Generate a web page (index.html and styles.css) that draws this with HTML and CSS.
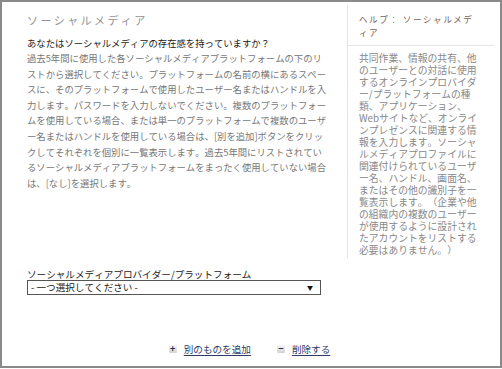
FILE: index.html
```html
<!DOCTYPE html>
<html lang="ja">
<head>
<meta charset="utf-8"/>
<title>ソーシャルメディア</title>
<link rel="stylesheet" href="styles.css">
</head>
<body>
<div class="frame">
	<div class="top">
		<div class="main">
			<h1 class="title">ソーシャルメディア</h1>
			<p class="question">あなたはソーシャルメディアの存在感を持っていますか？</p>
			<p class="desc">過去5年間に使用した各ソーシャルメディアプラットフォームの下のリストから選択してください。プラットフォームの名前の横にあるスペースに、そのプラットフォームで使用したユーザー名またはハンドルを入力します。パスワードを入力しないでください。複数のプラットフォームを使用している場合、または単一のプラットフォームで複数のユーザー名またはハンドルを使用している場合は、[別を追加]ボタンをクリックしてそれぞれを個別に一覧表示します。過去5年間にリストされているソーシャルメディアプラットフォームをまったく使用していない場合は、[なし]を選択します。</p>
		</div>
		<div class="side">
			<h2 class="side-title">ヘルプ： ソーシャルメディア</h2>
			<p class="side-text">共同作業、情報の共有、他のユーザーとの対話に使用するオンラインプロバイダー/プラットフォームの種類、アプリケーション、Webサイトなど、オンラインプレゼンスに関連する情報を入力します。ソーシャルメディアプロファイルに関連付けられているユーザー名、ハンドル、画面名、またはその他の識別子を一覧表示します。（企業や他の組織内の複数のユーザーが使用するように設計されたアカウントをリストする必要はありません。）</p>
		</div>
	</div>
	<div class="field">
		<label class="label" for="provider">ソーシャルメディアプロバイダー/プラットフォーム</label>
		<div class="select-wrap">
			<select id="provider" class="select">
				<option>- 一つ選択してください -</option>
			</select>
			<span class="arrow">▼</span>
		</div>
	</div>
	<div class="actions">
		<a class="action" href="#"><span class="ico">+</span><span class="txt">別のものを追加</span></a>
		<a class="action" href="#"><span class="ico">−</span><span class="txt">削除する</span></a>
	</div>
</div>
</body>
</html>
```
FILE: styles.css
```css
html, body {
	margin: 0;
	background: #fff;
}
body {
	font-family: "Noto Sans CJK JP", "Noto Sans", sans-serif;
	text-spacing-trim: space-all;
	font-kerning: none;
}
.frame {
	box-sizing: border-box;
	width: 502px;
	height: 368px;
	border: 2px solid #8a8a8a;
	padding: 3px 0 0 25px;
}
/* top area */
.top {
	display: flex;
	align-items: flex-start;
}
.main {
	width: 302px;
	padding-top: 8px;
	font-size: 9.35px;
	line-height: 15.6px;
	word-break: break-all;
}
.title {
	margin: 0 0 9px;
	font-size: 11px;
	font-weight: normal;
	letter-spacing: 2.4px;
	line-height: 14px;
	color: #939393;
}
.question {
	margin: 0 0 1px;
	line-height: 14px;
	color: #1a1a1a;
}
.desc {
	margin: 0;
	color: #777;
}
/* help */
.side {
	margin-left: 18px;
	width: 124px;
	border-left: 1px solid #e2e2e2;
	padding: 8px 11px 2px 11px;
}
.side-title {
	margin: 0 -11px 6px -11px;
	padding: 0 11px 6px 11px;
	border-bottom: 1px solid #e6e6e6;
	font-size: 8.6px;
	font-weight: normal;
	letter-spacing: 1.5px;
	line-height: 13px;
	color: #7a5f58;
}
.side-text {
	margin: 0;
	font-size: 9.8px;
	line-height: 12px;
	color: #888;
}
/* select */
.field {
	margin-top: 10px;
	font-size: 9.6px;
	color: #222;
}
.label {
	display: block;
	line-height: 12px;
}
.select-wrap {
	position: relative;
	width: 294px;
}
.select {
	display: block;
	box-sizing: border-box;
	width: 100%;
	height: 15px;
	margin: 0;
	padding: 0 0 0 3px;
	border: 1px solid #555;
	border-radius: 0;
	appearance: none;
	background: #fff;
	font: inherit;
	line-height: 13px;
	color: #222;
}
.arrow {
	position: absolute;
	right: 8px;
	top: 4px;
	font-size: 6px;
	line-height: 7px;
	color: #111;
	pointer-events: none;
}
/* actions */
.actions {
	display: flex;
	justify-content: center;
	gap: 26px;
	margin: 47px 0 0 -28px;
	font-size: 9.6px;
}
.action {
	display: flex;
	align-items: center;
	gap: 7px;
	text-decoration: none;
}
.ico {
	display: inline-flex;
	align-items: center;
	justify-content: center;
	width: 8px;
	height: 8px;
	background: linear-gradient(#f6f6f6, #d2d2d2);
	border-radius: 1px;
	font-size: 9px;
	font-weight: bold;
	line-height: 8px;
	color: #2a3450;
}
.txt {
	color: #2e3a66;
	text-decoration: underline;
	text-underline-offset: 2px;
}
```
